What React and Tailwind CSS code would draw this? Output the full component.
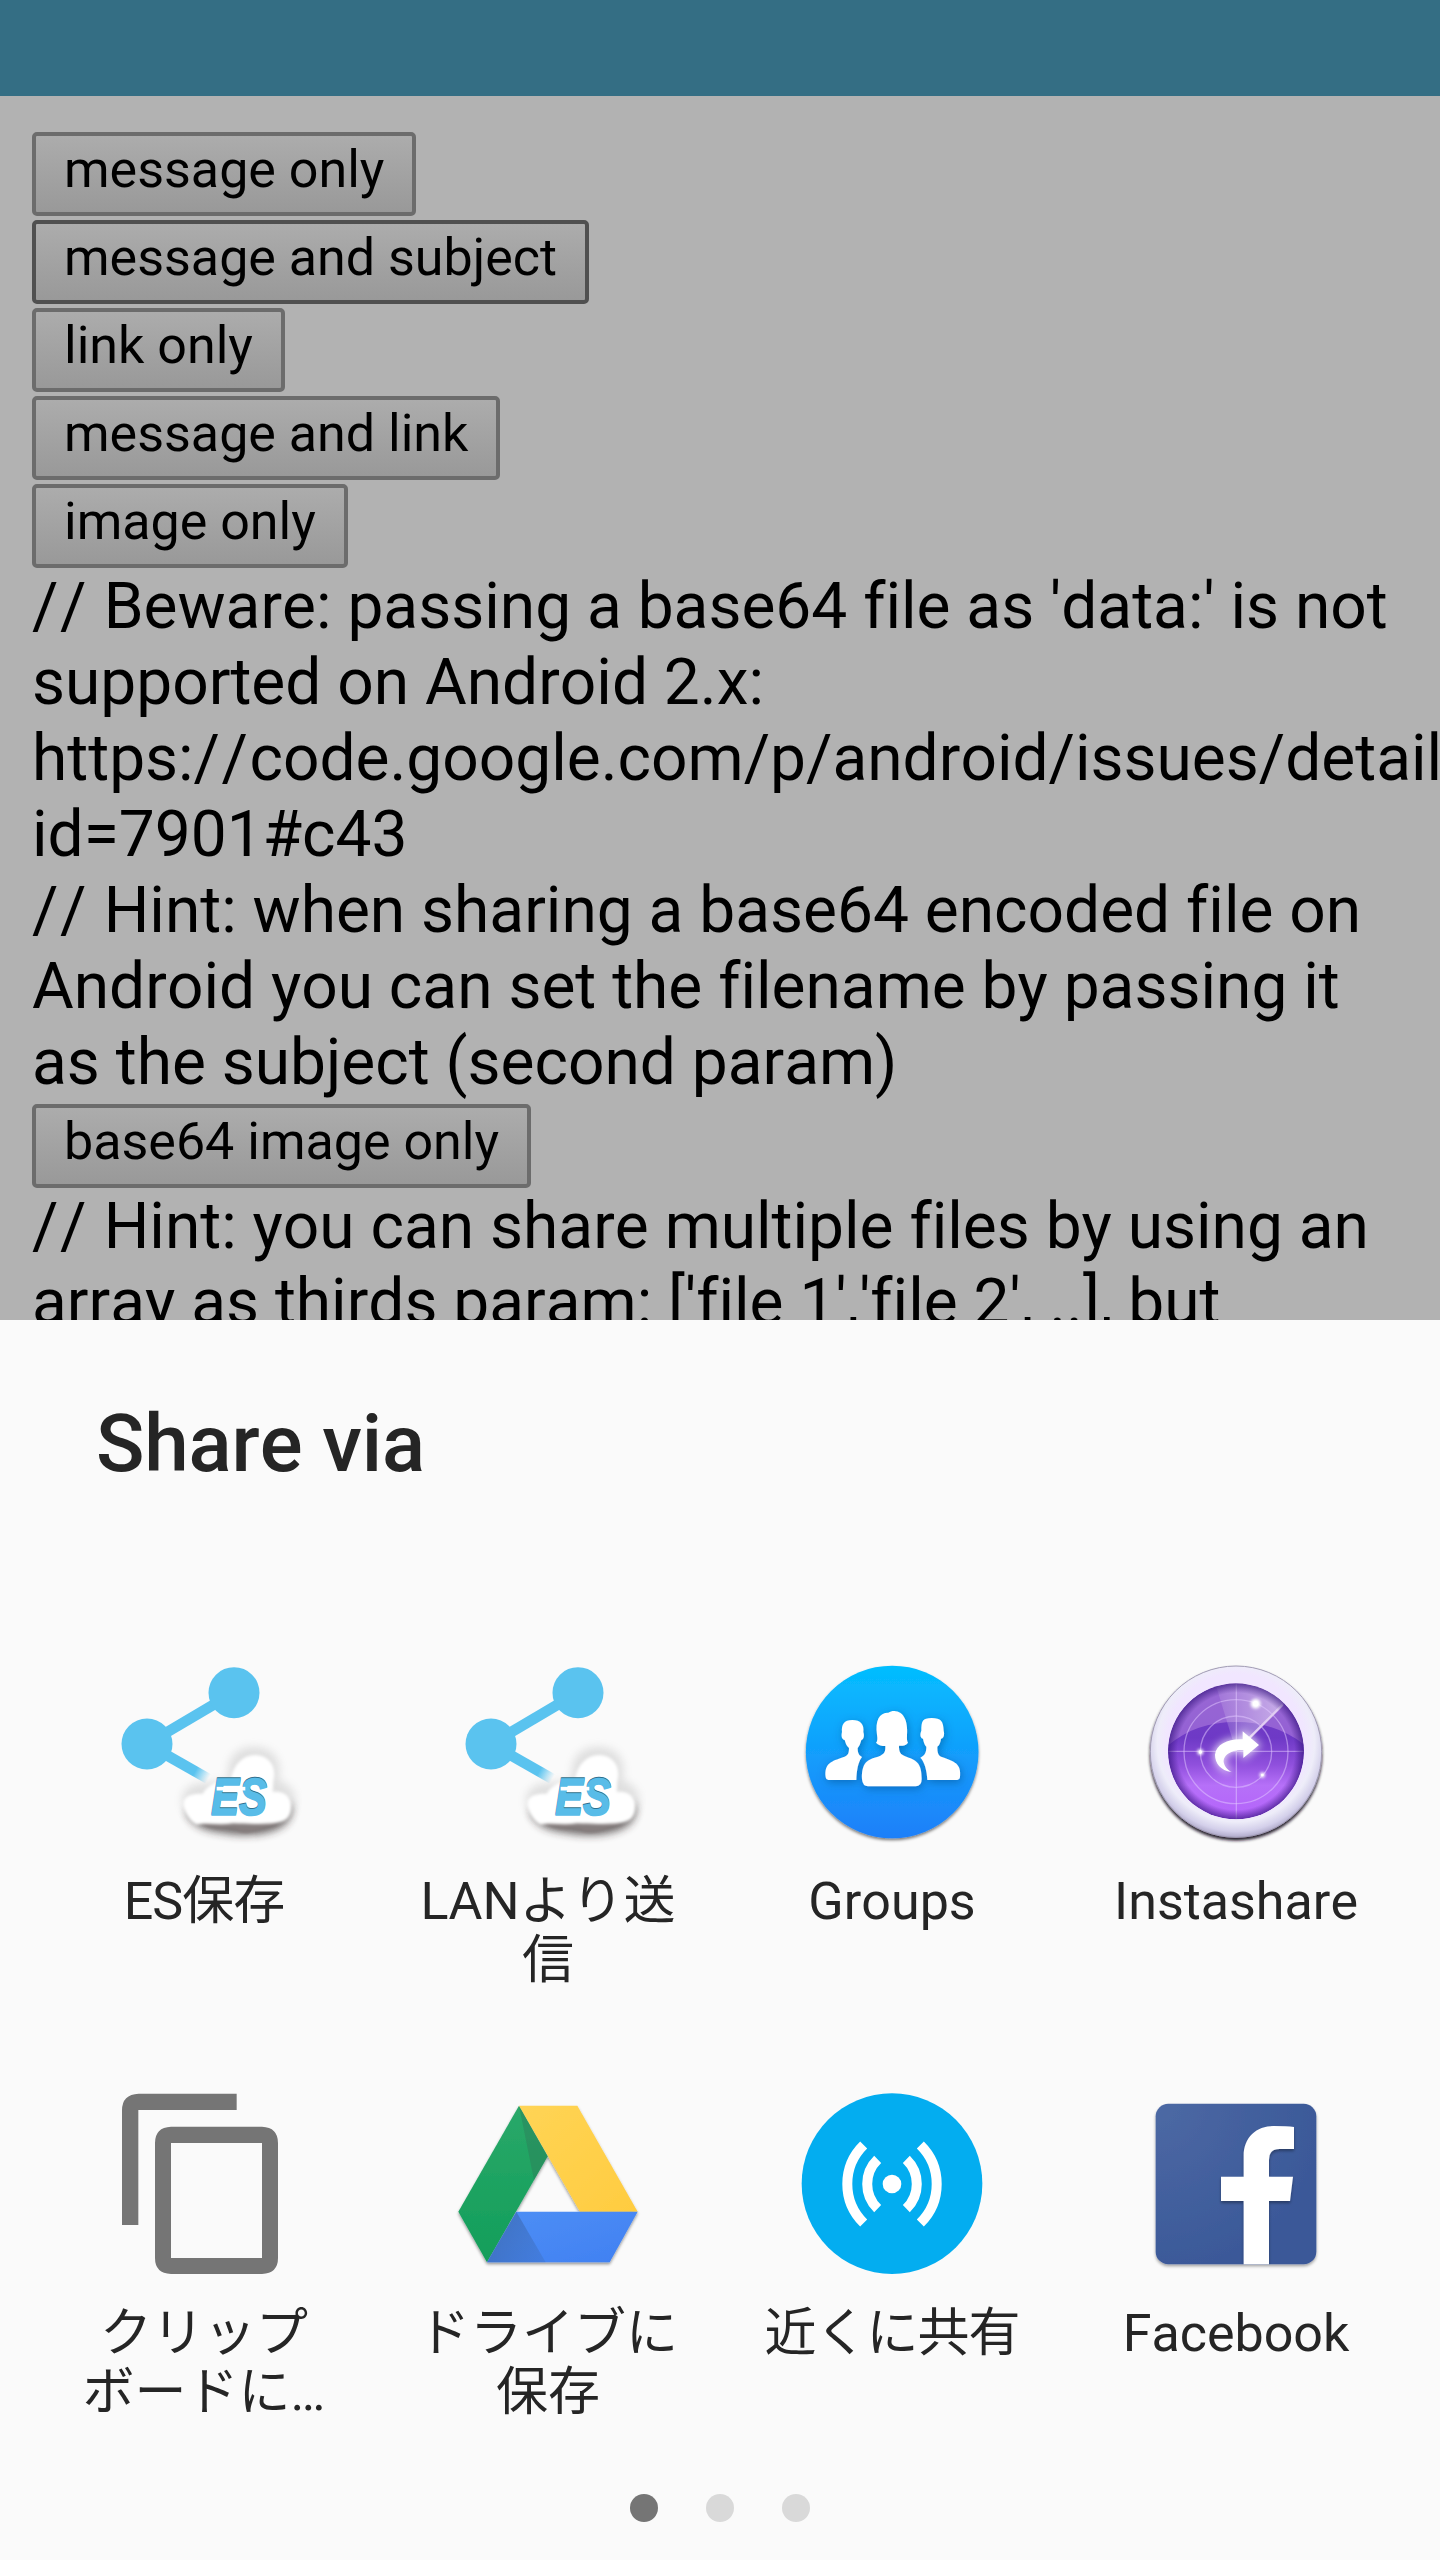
const pageButtons = ['message only', 'message and subject', 'link only', 'message and link', 'image only'];

function PageButton({ children, focused = false }) {
  return (
    <button
      className={
        'block h-[84px] w-fit whitespace-nowrap rounded-[5px] border-4 bg-linear-to-b from-[#acacac] to-[#999999] px-[28px] pt-[2px] pb-[10px] text-left text-[52px] leading-[64px] text-black ' +
        (focused ? 'border-[#505050]' : 'border-[#6c6c6c]')
      }
    >
      {children}
    </button>
  );
}

function Slashes() {
  return <span className="tracking-[1.5px]">//</span>;
}

function EsIcon({ id }) {
  return (
    <svg className="size-[196px]" viewBox="18 42 588 588">
      <defs>
        <filter id={id + 'soft'} x="-30%" y="-30%" width="160%" height="170%">
          <feGaussianBlur stdDeviation="12" />
        </filter>
        <filter id={id + 'edge'} x="-10%" y="-10%" width="120%" height="120%">
          <feGaussianBlur stdDeviation="4" />
        </filter>
        <linearGradient id={id + 'fade'} gradientUnits="userSpaceOnUse" x1="285" y1="395" x2="335" y2="423">
          <stop offset="0" stopColor="#5ac3ef" />
          <stop offset="0.8" stopColor="#5ac3ef" stopOpacity="0" />
        </linearGradient>
      </defs>
      <path d="M141 312 402 158" stroke="#5ac3ef" strokeWidth="32" />
      <path d="M141 312 345 428" stroke={'url(#' + id + 'fade)'} strokeWidth="32" />
      <circle cx="141" cy="312" r="76.500" fill="#5ac3ef" />
      <circle cx="402" cy="158" r="76.500" fill="#5ac3ef" />
      <path d="M258 510C270 555 310 572 370 578C430 590 500 586 545 560C565 548 576 530 574 495Z" fill="#2e2626" opacity=".7" filter={'url(#' + id + 'soft)'} />
      <path d="M385 420C375 350 415 318 465 320C520 322 550 360 535 420C590 440 600 490 570 530L270 530C225 490 245 430 310 430Z" fill="#777" opacity=".2" filter={'url(#' + id + 'soft)'} />
      <path d="M308 552q28 16 60 14t50 8 60-4 54-14l-20-30H320z" fill="#857d7d" filter={'url(#' + id + 'edge)'} />
      <path d="M290 554C268 544 258 522 252 504C242 472 272 458 308 462C318 440 350 420 392 418C402 370 430 345 466 345C506 346 532 378 520 424L518 456C552 452 574 470 574 500C574 530 560 544 532 548C480 554 440 552 400 550C360 556 320 548 290 554Z" fill="#fff" filter={'url(#' + id + 'edge)'} />
      <g fontFamily="Liberation Sans, sans-serif" fontSize="153" fontWeight="700" fontStyle="italic" strokeWidth="5">
        <text x="334" y="521" textLength="166" lengthAdjust="spacingAndGlyphs" fill="#2f6f8c" stroke="#2f6f8c">ES</text>
        <text x="334" y="525" textLength="166" lengthAdjust="spacingAndGlyphs" fill="#58bce8" stroke="#58bce8">ES</text>
      </g>
      <path d="M350 446h86" stroke="#fff" strokeWidth="11" />
    </svg>
  );
}

function GroupsIcon() {
  return (
    <svg className="size-[196px]" viewBox="42 42 588 588">
      <defs>
        <linearGradient id="groupsBg" x1="0" y1="0" x2="0" y2="1">
          <stop offset="0" stopColor="#04beff" />
          <stop offset="1" stopColor="#1f7ff9" />
        </linearGradient>
        <filter id="groupsShadow" x="-10%" y="-10%" width="120%" height="120%">
          <feDropShadow dx="0" dy="6" stdDeviation="5" floodColor="#000" floodOpacity=".5" />
        </filter>
        <filter id="peopleShadow" x="-20%" y="-20%" width="140%" height="150%">
          <feDropShadow dx="4" dy="8" stdDeviation="12" floodColor="#064a86" floodOpacity=".5" />
        </filter>
      </defs>
      <circle cx="336.500" cy="336" r="259" fill="url(#groupsBg)" filter="url(#groupsShadow)" />
      <g fill="#fff" filter="url(#peopleShadow)">
        <path d="M137 412c-5-42 18-48 52-60 14-5 18-10 18-28-8-6-10-14-13-24-9-2-11-12-8-24-2-22 6-36 31-36s36 14 33 36c4 12 1 22-6 24-3 10-5 18-11 24 0 14 3 22 13 27-12 16-16 40-17 69h-84q-7 0-8-8z" />
        <path d="M540 412c5-42-18-47-52-60-14-5-16-14-16-32 8-6 9-14 11-24 9-2 11-12 8-24-1-28-8-38-36-38s-31 10-31 38c-5 12-3 22 5 24 2 10 4 18 10 24 0 16-4 26-18 33 12 10 20 40 21 67h90q7 0 8-8z" />
        <path d="M246 418c-2-52 18-60 48-68 22-8 22-16 22-32-10 0-20-2-28-10q6-4 3-24c-6-42 6-66 34-66 8-4 15-6 22-4 30 4 37 40 34 74q-1 16 3 20c-6 8-15 10-27 9 0 18 2 26 24 34 30 10 44 20 44 66q0 22-18 22H264q-16 0-18-21z" />
      </g>
    </svg>
  );
}

function InstashareIcon() {
  return (
    <svg className="size-[196px]" viewBox="114 42 588 588">
      <defs>
        <radialGradient id="rim" cx=".5" cy=".45" r=".56">
          <stop offset="0.72" stopColor="#f1e6ff" />
          <stop offset="0.82" stopColor="#eeedf9" />
          <stop offset="0.92" stopColor="#d3cfea" />
          <stop offset="1" stopColor="#a59fc0" />
        </radialGradient>
        <linearGradient id="lens" x1="0" y1="0" x2="0" y2="1">
          <stop offset="0" stopColor="#7443c5" />
          <stop offset=".4" stopColor="#6e39c6" />
          <stop offset=".6" stopColor="#9050dd" />
          <stop offset=".75" stopColor="#b670f8" />
          <stop offset="1" stopColor="#b463fb" />
        </linearGradient>
        <radialGradient id="lensEdge">
          <stop offset=".86" stopColor="#30107a" stopOpacity="0" />
          <stop offset="1" stopColor="#30107a" stopOpacity=".65" />
        </radialGradient>
        <linearGradient id="sweep" x1="0" y1="0" x2="1" y2="0">
          <stop offset="0" stopColor="#fff" stopOpacity=".08" />
          <stop offset="1" stopColor="#fff" stopOpacity=".5" />
        </linearGradient>
        <filter id="rimShadow" x="-10%" y="-10%" width="120%" height="120%">
          <feDropShadow dx="0" dy="8" stdDeviation="4" floodColor="#15101c" floodOpacity=".95" />
        </filter>
        <filter id="glow" x="-60%" y="-60%" width="220%" height="220%">
          <feGaussianBlur stdDeviation="13" />
        </filter>
        <filter id="dotGlow" x="-100%" y="-100%" width="300%" height="300%">
          <feGaussianBlur stdDeviation="4" />
        </filter>
        <clipPath id="lensClip"><circle cx="408" cy="334" r="204" /></clipPath>
      </defs>
      <circle cx="408" cy="335" r="257" fill="url(#rim)" stroke="#a19bb4" strokeWidth="3" filter="url(#rimShadow)" />
      <g clipPath="url(#lensClip)">
        <circle cx="408" cy="334" r="204" fill="url(#lens)" />
        <path d="M200 320V120h420v200c-60-50-130-74-212-74s-152 24-208 74z" fill="#d9a8ef" opacity=".36" />
        <path d="M408 334 340 110h220l-8 82z" fill="url(#sweep)" />
        <g fill="none" stroke="#e4c9ff" strokeOpacity=".5" strokeWidth="4">
          <circle cx="408" cy="335" r="107" />
          <circle cx="408" cy="335" r="156" />
          <path d="M204 334h408M409 130v408" />
        </g>
        <path d="m440 302 108-108" stroke="#e1cdf2" strokeWidth="7" />
        <circle cx="408" cy="334" r="204" fill="url(#lensEdge)" />
      </g>
      <path d="M395 396C361 392 345 368 345 344C349 312 385 296 428 298V274L477 315L430 354V330C392 328 366 348 372 370C376 384 384 390 395 396Z" fill="#fff" stroke="#fff" strokeWidth="8" opacity=".8" filter="url(#glow)" />
      <path d="M395 396C361 392 345 368 345 344C349 312 385 296 428 298V274L477 315L430 354V330C392 328 366 348 372 370C376 384 384 390 395 396Z" fill="#fff" />
      <g fill="#fff" filter="url(#dotGlow)">
        <circle cx="467" cy="191" r="15" />
        <circle cx="301" cy="336" r="9" />
        <circle cx="487" cy="405" r="8" />
      </g>
      <g fill="#fff">
        <circle cx="467" cy="191" r="8" />
        <circle cx="301" cy="336" r="5" />
        <circle cx="487" cy="405" r="4" />
      </g>
    </svg>
  );
}

function CopyIcon() {
  return (
    <svg className="size-[196px]" viewBox="108 48 588 588" fill="#757575">
      <path d="M500 71H206q-50 2-50 50v344h49V120h295z" />
      <path fillRule="evenodd" d="M303 170h273q48 2 48 49v345q0 46-48 48H303q-48-2-48-48V219q0-47 48-49zm0 49v345h273V219z" />
    </svg>
  );
}

function DriveIcon() {
  return (
    <svg className="size-[196px]" viewBox="150 48 588 588">
      <defs>
        <linearGradient id="dGreen" x1="0" y1="0" x2="0" y2="1">
          <stop offset="0" stopColor="#2aa869" />
          <stop offset="1" stopColor="#129e5a" />
        </linearGradient>
        <linearGradient id="dYellow" x1="0" y1="0" x2="1" y2="1">
          <stop offset="0" stopColor="#ffd455" />
          <stop offset="1" stopColor="#ffcc40" />
        </linearGradient>
        <linearGradient id="dBlue" x1="0" y1="0" x2="1" y2="1">
          <stop offset="0" stopColor="#4e8ff5" />
          <stop offset="1" stopColor="#4080f2" />
        </linearGradient>
        <linearGradient id="dFold" x1="0" y1=".5" x2="1" y2="1">
          <stop offset="0" stopColor="#3c6ab4" stopOpacity=".75" />
          <stop offset="1" stopColor="#3c6ab4" stopOpacity=".3" />
        </linearGradient>
        <filter id="driveShadow" x="-10%" y="-10%" width="120%" height="120%">
          <feDropShadow dx="0" dy="6" stdDeviation="5" floodColor="#000" floodOpacity=".4" />
        </filter>
      </defs>
      <g filter="url(#driveShadow)">
        <path d="M357 107 175 425l86 152 182-318z" fill="url(#dGreen)" />
        <path d="M357 107h175l181 318H540z" fill="url(#dYellow)" />
        <path d="M349 425h364l-84 152H261z" fill="url(#dBlue)" />
      </g>
      <path d="m357 107 86 152-41 71z" fill="#2b7f59" opacity=".5" />
      <path d="m349 425 88 152H261z" fill="url(#dFold)" />
    </svg>
  );
}

function NearbyIcon() {
  return (
    <svg className="size-[196px]" viewBox="132 48 588 588">
      <circle cx="426" cy="341" r="271" fill="#03adf0" />
      <circle cx="426" cy="342" r="28" fill="#fff" />
      <g fill="none" stroke="#fff" strokeWidth="30">
        <path d="M383 268a103 103 0 0 0 0 148M341 225a164 164 0 0 0 0 234M469 268a103 103 0 0 1 0 148M511 225a164 164 0 0 1 0 234" />
      </g>
    </svg>
  );
}

function FacebookIcon() {
  return (
    <svg className="size-[196px]" viewBox="114 48 588 588">
      <defs>
        <radialGradient id="fbBg" cx="0" cy="0" r="1.1">
          <stop offset="0" stopColor="#4d69a4" />
          <stop offset="1" stopColor="#3a5898" />
        </radialGradient>
        <filter id="fbShadow" x="-10%" y="-10%" width="120%" height="120%">
          <feDropShadow dx="0" dy="6" stdDeviation="5" floodColor="#000" floodOpacity=".35" />
        </filter>
        <clipPath id="fbClip"><rect x="167" y="101" width="482" height="482" rx="38" /></clipPath>
      </defs>
      <rect x="167" y="101" width="482" height="482" rx="38" fill="url(#fbBg)" filter="url(#fbShadow)" />
      <g clipPath="url(#fbClip)">
        <path filter="url(#fbShadow)" fill="#fff" d="M431 600V393h-68v-73h68v-62c0-56 38-90 90-90q40 0 61 3v66h-44q-31 0-31 32v51h72l-9 73h-63v207z" />
      </g>
    </svg>
  );
}

const targets = [
  { icon: <EsIcon id="save" />, lines: ['ES保存'], tight: true },
  { icon: <EsIcon id="lan" />, lines: ['LANより送', '信'] },
  { icon: <GroupsIcon />, lines: ['Groups'] },
  { icon: <InstashareIcon />, lines: ['Instashare'] },
  { icon: <CopyIcon />, lines: ['クリップ', 'ボードに…'] },
  { icon: <DriveIcon />, lines: ['ドライブに', '保存'] },
  { icon: <NearbyIcon />, lines: ['近くに共有'], tight: true },
  { icon: <FacebookIcon />, lines: ['Facebook'] },
];

export default function App() {
  return (
    <div className="flex h-[2560px] w-[1440px] flex-col overflow-hidden bg-[#b2b2b2] font-['Roboto','Noto_Sans_CJK_JP',sans-serif] [font-kerning:none] [font-variant-ligatures:none]">
      <header className="h-24 shrink-0 bg-[#346e84]" />
      <main className="h-[1224px] shrink-0 overflow-hidden px-8 pt-9 text-[64px] leading-[76px] text-black">
        <div className="flex flex-col gap-1">
          {pageButtons.map((label) => (
            <PageButton key={label} focused={label === 'message and subject'}>{label}</PageButton>
          ))}
        </div>
        <p className="whitespace-nowrap pt-px pb-[3px]">
          <Slashes /> Beware: passing a base64 file as 'data:' is not<br />
          supported on Android 2.x:<br />
          https:<Slashes />code.google.com/p/android/issues/detail?<br />
          id=7901#c43<br />
          <Slashes /> Hint: when sharing a base64 encoded file on<br />
          Android you can set the filename by passing it<br />
          as the subject (second param)
        </p>
        <PageButton>base64 image only</PageButton>
        <p className="whitespace-nowrap pt-px">
          <Slashes /> Hint: you can share multiple files by using an<br />
          array as thirds param: ['file 1','file 2', ..], but
        </p>
      </main>
      <section className="flex h-[1240px] shrink-0 flex-col bg-[#fafafa] text-[#252525]">
        <h1 className="h-[334px] pl-[96px] pt-[77px] text-[80px] font-medium leading-[94px] tracking-[-0.15px]">Share via</h1>
        <div className="grid grid-cols-4 auto-rows-[432px] px-8">
          {targets.map(({ icon, lines, tight }) => (
            <div key={lines[0]} className="flex flex-col items-center">
              {icon}
              <div className={'pt-[22px] text-center text-[52px] leading-[60px] ' + (tight ? 'tracking-[-1px]' : '')}>
                {lines.map((line) => (
                  <div key={line} className="h-[59px] whitespace-nowrap">{line}</div>
                ))}
              </div>
            </div>
          ))}
        </div>
        <div className="flex justify-center gap-12 -mt-[24px]">
          <span className="size-7 rounded-full bg-[#757575]" />
          <span className="size-7 rounded-full bg-[#d9d9d9]" />
          <span className="size-7 rounded-full bg-[#d9d9d9]" />
        </div>
      </section>
    </div>
  );
}
